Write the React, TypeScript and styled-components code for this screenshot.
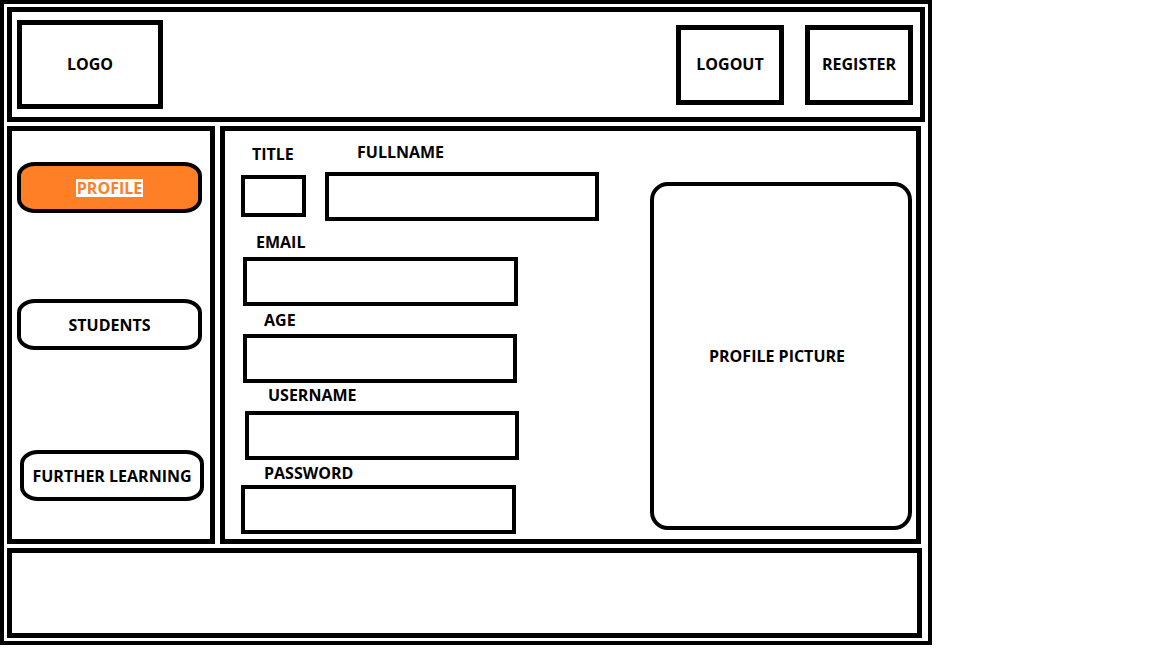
import React from 'react';
import styled, { createGlobalStyle } from 'styled-components';

const GlobalStyle = createGlobalStyle`
  html, body {
    margin: 0;
    padding: 0;
    background: #fff;
  }

  body {
    font-family: 'Open Sans', 'Liberation Sans', sans-serif;
    color: #000;
  }
`;

// outer double frame

const Frame = styled.div`
  width: 932px;
  height: 645px;
  box-sizing: border-box;
  border: 4px solid #000;
  padding: 3px;
  display: flex;
  flex-direction: column;
  gap: 4px;
`;

const Label = styled.span`
  font-size: 16px;
  font-weight: 700;
  line-height: 18px;
  white-space: nowrap;
`;

// header

const Header = styled.header`
  height: 115px;
  box-sizing: border-box;
  border: 5px solid #000;
  display: flex;
  align-items: center;
  padding: 0 7px 0 5px;
  gap: 21px;
`;

const HeaderBox = styled.div<{ w: number; h: number }>`
  width: ${(p) => p.w}px;
  height: ${(p) => p.h}px;
  box-sizing: border-box;
  border: 5px solid #000;
  display: flex;
  align-items: center;
  justify-content: center;
  padding-bottom: 2px;

  &:first-child {
    margin-right: auto;
  }
`;

// middle row

const Middle = styled.div`
  height: 418px;
  display: flex;
  gap: 5px;
`;

const Sidebar = styled.nav`
  width: 208px;
  box-sizing: border-box;
  border: 5px solid #000;
  display: flex;
  flex-direction: column;
`;

const Pill = styled.div<{ active?: boolean; top: number; left: number; w: number }>`
  width: ${(p) => p.w}px;
  height: 51px;
  margin-top: ${(p) => p.top}px;
  margin-left: ${(p) => p.left}px;
  box-sizing: border-box;
  border: 4px solid #000;
  border-radius: 18px / 14px;
  background: ${(p) => (p.active ? '#ff7f27' : '#fff')};
  display: flex;
  align-items: center;
  justify-content: center;
`;

const ActiveText = styled(Label)`
  color: #ff7f27;
  background: #fff;
  padding: 0 1px;
`;

const Main = styled.main`
  flex: 1;
  margin-right: 4px;
  box-sizing: border-box;
  border: 5px solid #000;
  display: flex;
`;

const Form = styled.div`
  display: flex;
  flex-direction: column;
`;

const FormRow = styled.div`
  display: flex;
  align-items: flex-start;
`;

const Field = styled.div<{ top: number; left: number }>`
  display: flex;
  flex-direction: column;
  margin-top: ${(p) => p.top}px;
  margin-left: ${(p) => p.left}px;
`;

const FieldLabel = styled(Label)<{ indent: number }>`
  padding-left: ${(p) => p.indent}px;
`;

const InputBox = styled.div<{ gap: number; w: number; h: number }>`
  margin-top: ${(p) => p.gap}px;
  width: ${(p) => p.w}px;
  height: ${(p) => p.h}px;
  box-sizing: border-box;
  border: 4px solid #000;
`;

const Picture = styled.div`
  width: 262px;
  height: 348px;
  margin: 51px 4px 0 auto;
  box-sizing: border-box;
  border: 4px solid #000;
  border-radius: 18px;
  display: flex;
  align-items: center;
  justify-content: center;
  padding-right: 8px;
`;

// footer

const Footer = styled.footer`
  height: 90px;
  margin-right: 3px;
  box-sizing: border-box;
  border: 5px solid #000;
`;

const fields = [
  { label: 'EMAIL', top: 12, left: 18, indent: 13, gap: 6, w: 275 },
  { label: 'AGE', top: 5, left: 18, indent: 21, gap: 5, w: 274 },
  { label: 'USERNAME', top: 3, left: 20, indent: 23, gap: 7, w: 274 },
  { label: 'PASSWORD', top: 4, left: 16, indent: 23, gap: 3, w: 275 },
];

export default function App() {
  return (
    <>
      <GlobalStyle />
      <Frame>
        <Header>
          <HeaderBox w={146} h={89}>
            <Label>LOGO</Label>
          </HeaderBox>
          <HeaderBox w={108} h={80}>
            <Label>LOGOUT</Label>
          </HeaderBox>
          <HeaderBox w={108} h={80}>
            <Label>REGISTER</Label>
          </HeaderBox>
        </Header>
        <Middle>
          <Sidebar>
            <Pill active top={31} left={5} w={185}>
              <ActiveText>PROFILE</ActiveText>
            </Pill>
            <Pill top={86} left={5} w={185}>
              <Label>STUDENTS</Label>
            </Pill>
            <Pill top={100} left={8} w={184}>
              <Label>FURTHER LEARNING</Label>
            </Pill>
          </Sidebar>
          <Main>
            <Form>
              <FormRow>
                <Field top={14} left={16}>
                  <FieldLabel indent={11}>TITLE</FieldLabel>
                  <InputBox gap={12} w={65} h={42} />
                </Field>
                <Field top={12} left={19}>
                  <FieldLabel indent={32}>FULLNAME</FieldLabel>
                  <InputBox gap={11} w={274} h={49} />
                </Field>
              </FormRow>
              {fields.map((f) => (
                <Field key={f.label} top={f.top} left={f.left}>
                  <FieldLabel indent={f.indent}>{f.label}</FieldLabel>
                  <InputBox gap={f.gap} w={f.w} h={49} />
                </Field>
              ))}
            </Form>
            <Picture>
              <Label>PROFILE PICTURE</Label>
            </Picture>
          </Main>
        </Middle>
        <Footer />
      </Frame>
    </>
  );
}
